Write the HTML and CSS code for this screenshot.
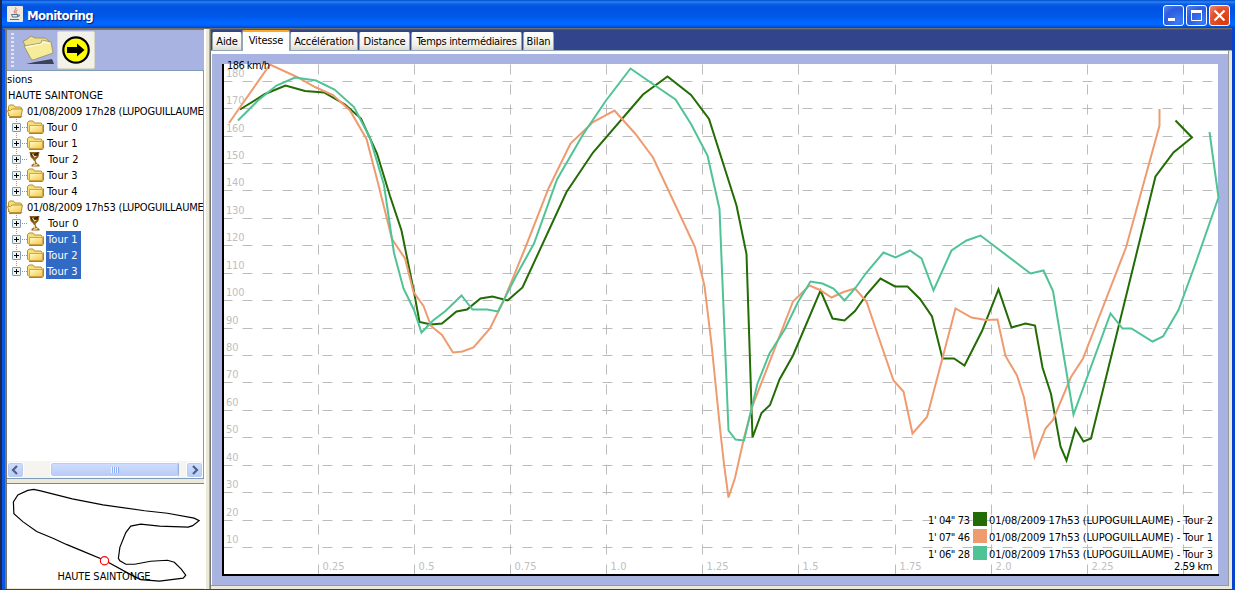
FILE: index.html
```
<!DOCTYPE html>
<html lang="fr">
<head>
  <meta charset="UTF-8">
  <title>Monitoring</title>
  <link rel="stylesheet" href="styles.css">
</head>
<body>

  <svg width="0" height="0" class="defs">
    <defs>
      <linearGradient id="gold" x1="0" y1="0" x2="1" y2="1">
        <stop offset="0" stop-color="#fffcc8"/>
        <stop offset="1" stop-color="#f4c64c"/>
      </linearGradient>
      <symbol id="folder" viewBox="0 0 17 14">
        <path d="M2 13.500h13.500l1-1.500V4.500" fill="none" stroke="#8c8878"/>
        <path d="M.5 11V2.500l1.500-1.500h4l1.500 2h6.500l1 1v8.500h-13z" fill="#f8dc78" stroke="#b8902c"/>
        <path d="M2.500 5.500h13v7h-13z" fill="url(#gold)" stroke="#c89c34" stroke-width=".8"/>
      </symbol>
      <symbol id="folder-open" viewBox="0 0 17 14">
        <path d="M2 13.500h12l1-1.500" fill="none" stroke="#8c8878"/>
        <path d="M1.500 12V2.500l1-1.500h4l1.500 2h5.500l1 1v2" fill="#f8dc78" stroke="#b8902c"/>
        <path d="M2.500 12.500L.5 6.500h3l1.500-1.500h10.500l-1.500 7.500z" fill="url(#gold)" stroke="#b8902c"/>
      </symbol>
      <symbol id="cup" viewBox="0 0 16 16">
        <path d="M2 1l10 0-1 5-3 3 1 3 3 2v1.500H4V14l3-2-1-3-3-3z" fill="#8c6224"/>
        <path d="M3 2l3 1 5-2-1 4-3 2-3-2z" fill="#3c2408"/>
        <path d="M5 3l2 3 2-1M7 10v3M6 14.500l4-1" stroke="#f0d898" stroke-width="1.300" fill="none"/>
      </symbol>
    </defs>
  </svg>

  <div class="window">
    <div class="titlebar">
      <svg class="java" width="16" height="16" viewBox="0 0 16 16">
        <rect width="16" height="16" rx="1" fill="#ece9e0"/>
        <path d="M8.500 1.500c2 2-3 3-.5 6M10.500 4c-2 1-2 2-1 3.500" stroke="#e0603c" fill="none"/>
        <path d="M4.500 8.500h6v2.500h-5zM10.500 9h2l-1 2M3 13.500h9" stroke="#507090" fill="none"/>
      </svg>
      <span class="title">Monitoring</span>
      <div class="buttons">
        <svg class="btn" viewBox="1 1 19 19"><path d="M5 13h7v3H5z" fill="#fff"/></svg>
        <svg class="btn" viewBox="1 1 19 19"><path d="M5.500 5.500h10v10h-10z" stroke="#fff" fill="none"/><path d="M5 5h11v3H5z" fill="#fff"/></svg>
        <svg class="btn close" viewBox="1 1 19 19"><path d="M5.500 5.500l10 10M15.500 5.500l-10 10" stroke="#fff" stroke-width="2.200"/></svg>
      </div>
    </div>

    <div class="content">
      <div class="left">
        <div class="toolbar">
          <div class="grip"></div>
          <svg class="open" width="34" height="34" viewBox="0 0 34 34">
            <path d="M4 31l9-2 17-3 2 5z" fill="#3c4258"/>
            <path d="M1 8l3-1 5-4 4 2 10 0 4 3 1 8-20 8z" fill="#efe08c" stroke="#8c8458" stroke-width=".7"/>
            <path d="M2 13l17-3 1-3 9 2 2 11-20 7-2-1z" fill="#f7ec9c" stroke="#8c8458" stroke-width=".7"/>
            <path d="M4 14l16-3 1-2 7 1.500" stroke="#fffde0" stroke-width="1.200" fill="none"/>
          </svg>
          <div class="go">
            <svg width="30" height="30" viewBox="0 0 30 30">
              <circle cx="15" cy="15" r="12.700" fill="#ff0" stroke="#000" stroke-width="2.200"/>
              <path d="M6 12h10V8.500l7.500 6.500-7.500 6.500V18H6z" fill="#000"/>
            </svg>
          </div>
        </div>

        <div class="tree">
          <ul>
            <li class="root"><span>sions</span></li>
            <li class="track"><span>HAUTE SAINTONGE</span></li>
            <li class="session"><svg><use href="#folder-open"/></svg><span>01/08/2009 17h28 (LUPOGUILLAUME</span></li>
            <li class="lap"><i></i><svg><use href="#folder"/></svg><span>Tour 0</span></li>
            <li class="lap"><i></i><svg><use href="#folder"/></svg><span>Tour 1</span></li>
            <li class="lap best"><i></i><svg><use href="#cup"/></svg><span>Tour 2</span></li>
            <li class="lap"><i></i><svg><use href="#folder"/></svg><span>Tour 3</span></li>
            <li class="lap last"><i></i><svg><use href="#folder"/></svg><span>Tour 4</span></li>
            <li class="session"><svg><use href="#folder-open"/></svg><span>01/08/2009 17h53 (LUPOGUILLAUME</span></li>
            <li class="lap best"><i></i><svg><use href="#cup"/></svg><span>Tour 0</span></li>
            <li class="lap selected"><i></i><svg><use href="#folder"/></svg><span>Tour 1</span></li>
            <li class="lap selected"><i></i><svg><use href="#folder"/></svg><span>Tour 2</span></li>
            <li class="lap selected last"><i></i><svg><use href="#folder"/></svg><span>Tour 3</span></li>
          </ul>
          <div class="scrollbar">
            <svg class="arrow" width="17" height="16" viewBox="1 1 15 14"><path d="M10 4L6 8l4 4" stroke="#4d6185" stroke-width="2.200" fill="none"/></svg>
            <div class="thumb"></div>
            <svg class="arrow" width="17" height="16" viewBox="1 1 15 14"><path d="M7 4l4 4-4 4" stroke="#4d6185" stroke-width="2.200" fill="none"/></svg>
          </div>
        </div>

        <svg class="map" width="198" height="105" viewBox="7 484 198 105">
          <polygon class="circuit" points="33,489.500 40,491 72,499 103,505 145,511 168,513.500 195,518.500 200,521 193.500,526 189,527.500 160,526.500 141,524.500 131,526.500 126,533 120,548 118.500,559 120,561.500 126,565 135,565 151,562 168,561 175,563 182,570 186.500,576 184,579 160,582 141,580.500 130,575 104.500,561 83,552 66,545 53,539 36,532 22,522 13,514 12.500,502 17,495 27,490.500"/>
          <circle cx="104.500" cy="561.500" r="4.200" fill="#fff" stroke="#f00" stroke-width="1.200"/>
          <text x="57" y="581" textLength="94">HAUTE SAINTONGE</text>
        </svg>
      </div>

      <div class="divider"></div>

      <div class="right">
        <div class="tabs">
          <div class="tab aide">Aide</div>
          <div class="tab active">Vitesse</div>
          <div class="tab accel">Accélération</div>
          <div class="tab distance">Distance</div>
          <div class="tab temps">Temps intermédiaires</div>
          <div class="tab bilan">Bilan</div>
        </div>
        <div class="panel">
          <svg class="chart" width="1016" height="531" viewBox="212 54 1016 531">
            <rect x="223" y="64" width="995" height="511" fill="#fff"/>
            <g id="grid"></g>
            <path class="axis" d="M223 64V575H1219"/>
            <polyline class="tour2" points="240,109.500 265,94 285.500,85.500 305,91 324,92.500 345,104.500 361,118.500 377,153.500 390,196 401.500,230.500 414,292 419.500,322 431,324.500 442,323.500 456.500,311.500 467,309.500 480.500,298.500 492.500,296.500 507.500,300.500 522.500,287.500 566.500,192 593,152.500 643,94.500 667.500,76.500 691,95 709,119 736.500,205.500 746.500,254 752.500,437.500 761.500,413 770,405 779.500,379.500 793,355.500 820.500,290.500 832.500,318.500 844.500,320.500 855,311 867,294 880.500,278.500 895,286.500 907.500,286.500 920,299 932,316.500 942.500,358.500 954,358.500 964.500,365.500 982,331 998.500,289.500 1011.500,327.500 1025.500,323.500 1035,325.500 1042.500,367.500 1051,394 1060.500,446.500 1066.500,460.500 1075.500,428.500 1083.500,441.500 1091,438.500 1155.500,176.500 1173.500,152.500 1192,137.500 1175.500,120.500"/>
            <polyline class="tour1" points="229,123 270,64.500 297,77 315,87 333,95 350,110.500 366.500,139 378,183 392,239 405,258.500 413.500,292 423.500,306 431,326 442,335 453,352.500 462.500,351.500 473.500,347.500 490,328.500 504,300 526,246 548.500,188.500 570.500,143.500 593,122 614.500,110.500 635.500,134 653,157.500 668.500,190.500 695,247 704.500,286 711.500,344 720.500,433 724,464 728.500,497.500 735,478 744,438 752.500,406 793,301.500 809.500,285.500 820,290 831.500,297.500 843.500,292 855,288.500 866.500,301.500 877.500,334 893.500,380.500 903.500,391.500 912.500,433.500 927,417 942.500,358 955.500,308.500 971.500,317.500 986,320 997.500,319.500 1005.500,356 1017,375.500 1024,397.500 1034.500,457 1045.500,428.500 1053,420 1071,377 1083,358.500 1126,247.500 1159.500,125.500 1159.500,109"/>
            <polyline class="tour3" points="238,120.500 258,100.500 276.500,85.500 295,77.500 316,80.500 334.500,89.500 354,107 370,138 384,185 394,253 403.500,288.500 414,310 421.500,332.500 433,320.500 445.500,311 461.500,295.500 472.500,309.500 487,309.500 498,311.500 515.500,277 534,243.500 557,179.500 583,134.500 606,100.500 630.500,68.500 655,85.500 675.500,99.500 691,124 707.500,155.500 719.500,209 728.500,430.500 735.500,439.500 744,440.500 757.500,383.500 769.500,353.500 785,329 798,302 810.500,281.500 822.500,283.500 833.500,288.500 844.500,300.500 855,288.500 866.500,272.500 883.500,252.500 895.500,257.500 910,250.500 921.500,258.500 933.500,290.500 951.500,250.500 966.500,240.500 980.500,235.500 1030.500,273.500 1043.500,270.500 1053,291 1073.500,414.500 1110.500,313.500 1122.500,328.500 1131.500,328.500 1152.500,341.500 1163,336.500 1178.500,310 1195.500,263.500 1218.500,197.500 1209.500,132"/>
            <text x="227" y="69" textLength="43">186 km/h</text>
            <text x="1174" y="570" textLength="38.500">2.59 km</text>
            <g id="legend"></g>
          </svg>
        </div>
      </div>
    </div>
  </div>

  <script>
    const grid = document.getElementById("grid");
    const legend = document.getElementById("legend");
    let out = "";

    // speed lines every 10 km/h
    for (let v = 10; v <= 180; v += 10) {
      const y = Math.floor(575 - v * 2.743) + 0.5;
      out += `<line x1="222.500" y1="${y}" x2="1213" y2="${y}"/>`;
      out += `<text x="226" y="${y - 4.5}" textLength="${v < 100 ? 12.5 : 18.5}">${v}</text>`;
    }

    // distance lines every 0.25 km
    const km = ["0.25", "0.5", "0.75", "1.0", "1.25", "1.5", "1.75", "2.0", "2.25", ""];
    km.forEach((label, i) => {
      const x = Math.floor(318.3 + i * 96.12) + 0.5;
      out += `<line x1="${x}" y1="574.500" x2="${x}" y2="64"/>`;
      if (label) {
        out += `<text x="${x + 4}" y="570" textLength="${label.length * 6 - 2}">${label}</text>`;
      }
    });
    grid.innerHTML = out;

    const laps = [
      { time: "1' 04\" 73", color: "#236b04", name: "Tour 2" },
      { time: "1' 07\" 46", color: "#ee9b6f", name: "Tour 1" },
      { time: "1' 06\" 28", color: "#50c396", name: "Tour 3" }
    ];
    legend.innerHTML = laps.map((lap, i) => {
      const y = 524 + i * 17;
      return `<text x="928" y="${y}" textLength="42">${lap.time}</text>
        <rect x="973" y="${y - 12}" width="14" height="14" fill="${lap.color}"/>
        <text x="989" y="${y}" textLength="224">01/08/2009 17h53 (LUPOGUILLAUME) - ${lap.name}</text>`;
    }).join("");
  </script>

</body>
</html>
```
FILE: styles.css
```
* {
  box-sizing: border-box;
}

body {
  margin: 0;
  width: 1235px;
  height: 590px;
  overflow: hidden;
  background: #0a42d0;
  font-family: "DejaVu Sans Condensed", "DejaVu Sans", sans-serif;
  font-size: 11px;
  color: #000;
}

.defs {
  position: absolute;
}

.window {
  height: 590px;
  display: flex;
  flex-direction: column;
  border-left: 2px solid #1c2850;
}

.titlebar {
  height: 28px;
  flex: none;
  display: flex;
  align-items: center;
  padding: 2px 5px 0 5px;
  background: linear-gradient(#0048c8 0, #2a85f5 2px, #0a5ce8 4px, #0053e1 8px, #0057e8 16px, #0066ff 22px, #0066ff 25px, #0043c8 28px);
}

.title {
  margin-left: 4px;
  color: #fff;
  font-size: 13px;
  font-weight: bold;
  letter-spacing: -0.6px;
  text-shadow: 1px 1px 1px #0a1883;
}

.java {
  margin-bottom: 2px;
}

.buttons {
  margin-left: auto;
  display: flex;
  gap: 2px;
}

.btn {
  width: 21px;
  height: 21px;
  border: 1px solid #fff;
  border-radius: 3px;
  background: radial-gradient(circle at 75% 80%, #3c7cf8, #2c5cdc 60%, #5c88ec);
}

.btn.close {
  background: radial-gradient(circle at 75% 80%, #d83c08, #e05030 60%, #f09078);
}

.content {
  flex: 1;
  display: flex;
  margin: 0 3px 1px 0;
  border-left: 3px solid #0858e8;
  border-top: 1px solid #716f64;
  background: #ece9d8;
}

.left {
  width: 199px;
  border-left: 2px solid #77776c;
  display: flex;
  flex-direction: column;
}

.toolbar {
  height: 41px;
  display: flex;
  align-items: center;
  border-top: 1px solid #77776c;
  background: #a9b3e1;
}

.grip {
  width: 3px;
  height: 34px;
  margin-left: 4px;
  background: repeating-linear-gradient(#e4e4ec 0 2px, #a9b3e1 2px 4px);
}

.open {
  margin-left: 8px;
}

.go {
  margin-left: 1px;
  width: 38px;
  height: 38px;
  display: flex;
  align-items: center;
  justify-content: center;
  background: #f2f1ea;
  border: 1px solid #dcd8c8;
  border-radius: 2px;
}

.tree {
  height: 409px;
  width: 197px;
  display: flex;
  flex-direction: column;
  background: #fff;
  border: 1px solid #7f9db9;
  border-left: none;
}

.tree ul {
  flex: 1;
  margin: 0;
  padding: 0;
  list-style: none;
  overflow: hidden;
}

.tree li {
  height: 16px;
  line-height: 16px;
  display: flex;
  align-items: center;
  white-space: nowrap;
}

.tree span {
  height: 16px;
  padding-top: 1px;
}

.track span {
  margin-left: 1px;
  letter-spacing: -0.04px;
}

.tree svg {
  width: 17px;
  height: 14px;
  flex: none;
}

.session span {
  margin-left: 3px;
  letter-spacing: -0.19px;
}

.lap {
  padding-left: 5px;
  background: repeating-linear-gradient(#999 0 1px, #fff 1px 2px) 9px 0 / 1px 100% no-repeat;
}

.lap.last {
  background-size: 1px 8px;
}

.lap i {
  width: 9px;
  height: 9px;
  margin-right: 6px;
  border: 1px solid #7b98b5;
  border-radius: 1px;
  background:
    linear-gradient(#000, #000) center / 5px 1px no-repeat,
    linear-gradient(#000, #000) center / 1px 5px no-repeat,
    #f4f2ec;
  position: relative;
}

.lap i::after {
  content: "";
  position: absolute;
  left: 9px;
  top: 3px;
  width: 5px;
  border-top: 1px dotted #999;
}

.lap span {
  margin-left: 2px;
  padding: 1px 3px 0 1px;
  width: 35px;
  letter-spacing: 0.1px;
}

.lap.best svg {
  height: 16px;
}

.lap.best span {
  margin-left: 3px;
}

.selected span {
  background: #316ac5;
  color: #fff;
}

.scrollbar {
  height: 17px;
  display: flex;
  padding: 1px 0;
  background: #f5f4ef;
}

.arrow,
.thumb {
  background: linear-gradient(#d0defd, #b9cbf6);
  border: 1px solid #fff;
  border-radius: 3px;
  box-shadow: inset 0 0 0 1px #bccaf0;
}

.scrollbar .arrow {
  width: 17px;
  height: 16px;
}

.thumb {
  width: 129px;
  margin-left: 26px;
  margin-right: 7px;
  display: flex;
  justify-content: center;
  align-items: center;
  border-right-color: #98b0e0;
}

.thumb::after {
  content: "";
  width: 8px;
  height: 6px;
  background: repeating-linear-gradient(90deg, #eef4fe 0 1px, #8cb0f8 1px 2px);
}

.map {
  margin-top: 4px;
  background: #fff;
  border-top: 1px solid #84847c;
}

.circuit {
  fill: none;
  stroke: #000;
  stroke-width: 1.2;
}

.divider {
  width: 7px;
  background: linear-gradient(90deg, #fff 0 2px, #ece9d8 2px 5px, #aca899 5px 6px, #77776c 6px);
}

.right {
  flex: 1;
  display: flex;
  flex-direction: column;
}

.tabs {
  height: 22px;
  display: flex;
  align-items: flex-end;
  padding-left: 1px;
  background: #31448c;
  border-top: 1px solid #4c5474;
  border-bottom: 1px solid #91a7b4;
}

.tab {
  height: 18px;
  line-height: 18px;
  margin-right: 1px;
  text-align: center;
  white-space: nowrap;
  letter-spacing: -0.15px;
  background: linear-gradient(#fff, #f0f0ea 70%, #dcdace);
  border: 1px solid #91a7b4;
  border-top-color: #fff;
  border-bottom: none;
  border-radius: 2px 2px 0 0;
}

.tab.active {
  height: 21px;
  line-height: 17px;
  width: 48px;
  margin-left: -1px;
  margin-right: 0;
  margin-bottom: -1px;
  background: #fff;
  border-top: 2px solid #ffa828;
}

.aide {
  width: 30px;
}

.accel {
  width: 68px;
}

.distance {
  width: 51px;
}

.temps {
  width: 111px;
  letter-spacing: -0.3px;
}

.bilan {
  width: 31px;
}

.panel {
  flex: 1;
  width: 1018px;
  padding: 3px 0 0 1px;
  background: #fff;
  border-right: 1px solid #919b9c;
  border-bottom: 1px solid #919b9c;
  margin-bottom: 3px;
}

.chart {
  display: block;
  background: #a9b3e1;
}

.chart line {
  stroke: #bcbcbc;
  stroke-dasharray: 10 10;
}

#grid text {
  fill: #c0c0c0;
}

.axis {
  fill: none;
  stroke: #000;
  stroke-width: 2;
}

.chart polyline {
  fill: none;
  stroke-width: 2;
}

.tour1 {
  stroke: #ee9b6f;
}

.tour2 {
  stroke: #236b04;
}

.tour3 {
  stroke: #50c396;
}
```
